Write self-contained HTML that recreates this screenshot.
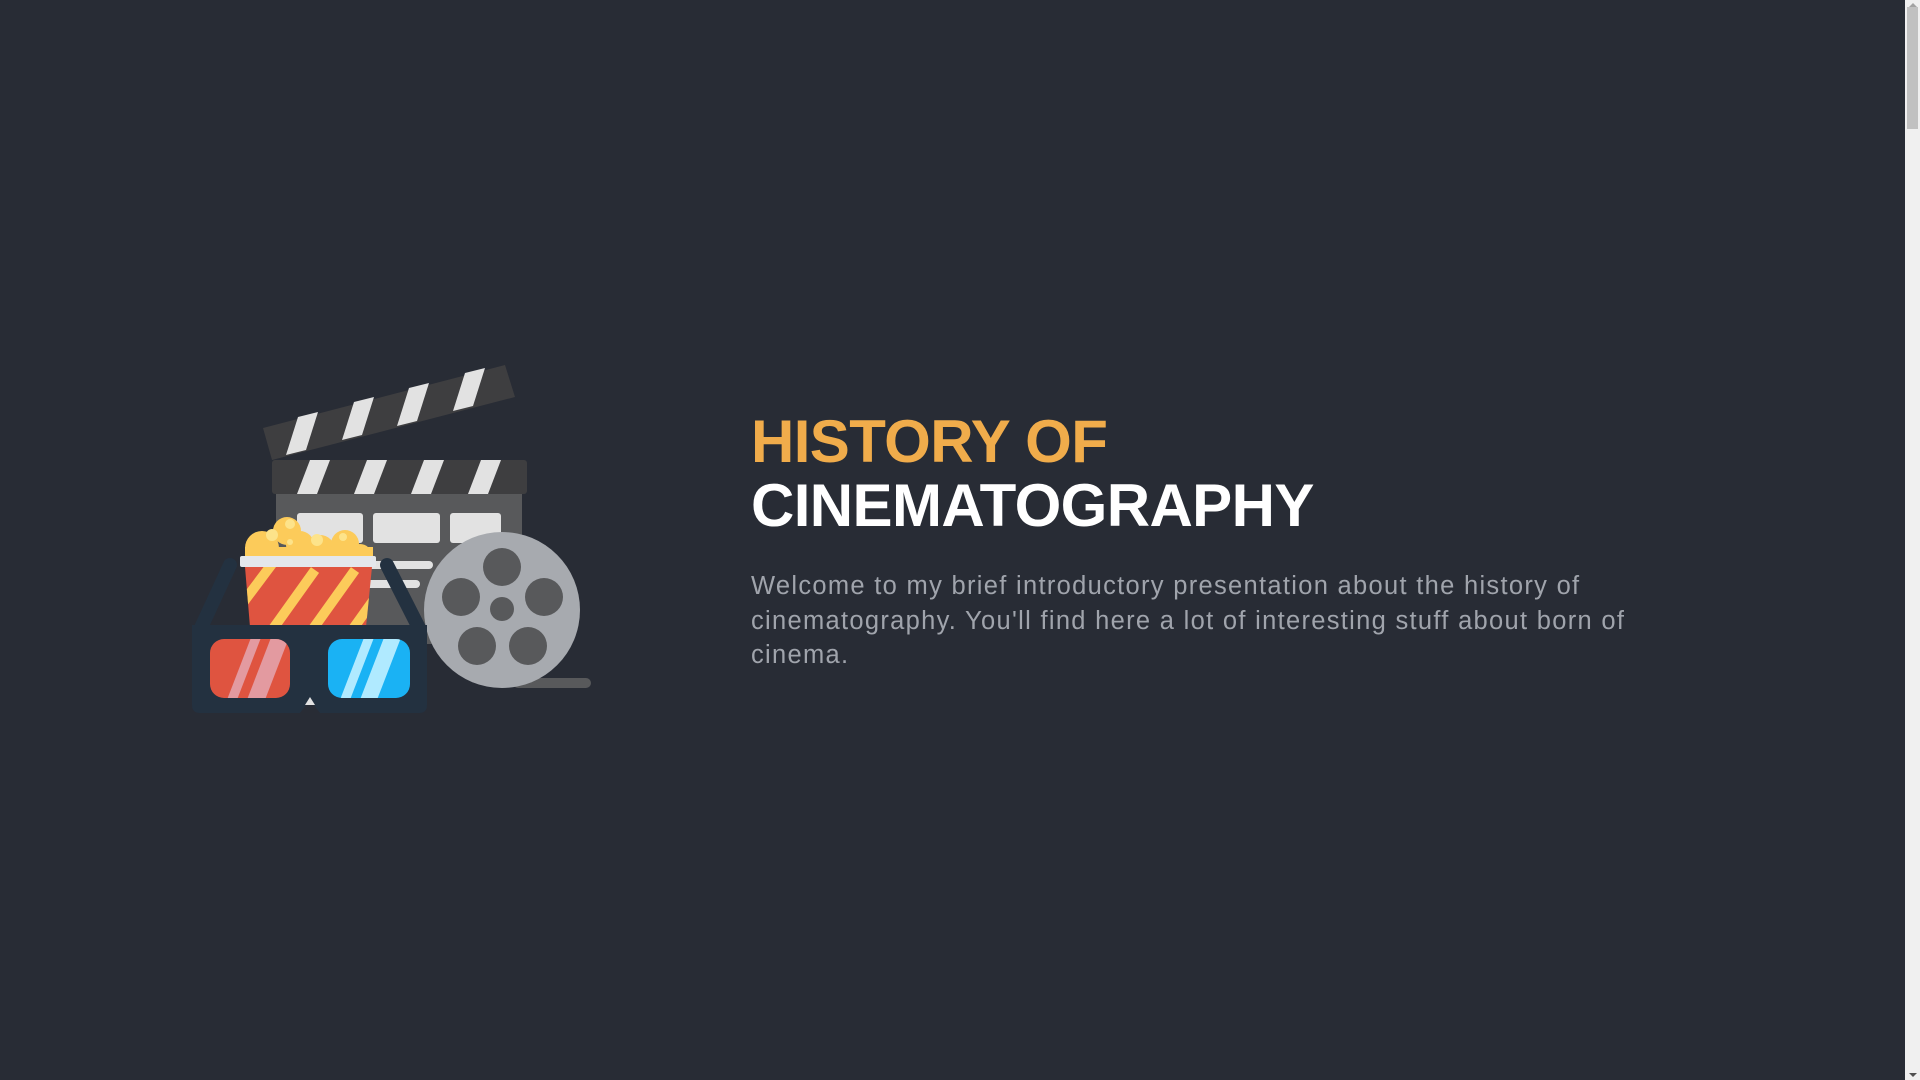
<!DOCTYPE html>
<html><head><meta charset="utf-8"><style>
html,body{margin:0;padding:0;}
body{width:1920px;height:1080px;background:#282c35;overflow:hidden;position:relative;font-family:"Liberation Sans",sans-serif;}
.sb{position:absolute;right:0;top:0;width:15px;height:1080px;background:#f0f0f0;}
.sb .th{position:absolute;left:2px;top:7px;width:11px;height:122px;background:#c1c1c1;}
.sb .up{position:absolute;left:4px;top:3px;width:0;height:0;border-left:4px solid transparent;border-right:4px solid transparent;border-bottom:4px solid #a3a3a3;}
.sb .dn{position:absolute;left:4px;bottom:3px;width:0;height:0;border-left:4px solid transparent;border-right:4px solid transparent;border-top:4px solid #505050;}
h1{position:absolute;left:751px;top:410px;margin:0;font-size:60px;line-height:64px;font-weight:bold;letter-spacing:-0.6px;}
h1 .o{color:#f0ac4b;}h1 .w{color:#fff;}
p{position:absolute;left:751px;top:569px;margin:0;font-size:25.5px;line-height:34.5px;color:#a0a4ac;letter-spacing:1.3px;white-space:nowrap;}
</style></head><body>
<svg style="position:absolute;left:0;top:0" width="700" height="800" viewBox="0 0 700 800">
<rect x="276" y="494" width="246" height="150" fill="#58595b"/>
<rect x="297" y="513" width="66" height="30" rx="3" fill="#e2e2e2"/>
<rect x="373" y="513" width="67" height="30" rx="3" fill="#e2e2e2"/>
<rect x="450" y="513" width="51" height="30" rx="3" fill="#e2e2e2"/>
<rect x="300" y="561" width="133" height="8" rx="4" fill="#e2e2e2"/>
<rect x="300" y="580" width="120" height="8" rx="4" fill="#e2e2e2"/>
<rect x="272" y="460" width="255" height="34" rx="3" fill="#3e3e40"/>
<g fill="#e2e2e2">
<polygon points="297,494 310,460 330,460 317,494"/>
<polygon points="354,494 367,460 387,460 374,494"/>
<polygon points="411,494 424,460 444,460 431,494"/>
<polygon points="468,494 481,460 501,460 488,494"/>
</g>
<polygon points="263,428 505,365 515,397 272,460" fill="#3e3e40"/>
<g fill="#e2e2e2">
<polygon points="286,455 298,417 318,412 306,450"/>
<polygon points="342,440 354,402 374,397 362,435"/>
<polygon points="397,426 409,388 429,383 417,421"/>
<polygon points="453,411 465,373 485,368 473,406"/>
</g>
<rect x="513" y="678" width="78" height="10" rx="5" fill="#58595b"/>
<circle cx="502" cy="610" r="78" fill="#a7aaaf"/>
<g fill="#58595b">
<circle cx="502" cy="567" r="19"/>
<circle cx="461" cy="597" r="19"/>
<circle cx="544" cy="597" r="19"/>
<circle cx="477" cy="646" r="19"/>
<circle cx="528" cy="646" r="19"/>
<circle cx="502" cy="609" r="12"/>
</g>
<g fill="#fccb5a">
<circle cx="262" cy="548" r="17"/><circle cx="287" cy="531" r="14"/><circle cx="300" cy="545" r="14"/>
<circle cx="320" cy="550" r="15"/><circle cx="345" cy="544" r="14"/><circle cx="360" cy="556" r="12"/>
<rect x="245" y="547" width="128" height="12"/>
</g>
<g fill="#fde38a"><circle cx="272" cy="535" r="6"/><circle cx="290" cy="524" r="5"/><circle cx="317" cy="540" r="6"/><circle cx="343" cy="537" r="4"/><circle cx="290" cy="542" r="3"/></g>
<defs><clipPath id="bk"><polygon points="245,567 372,567 366,627 250,627"/></clipPath></defs>
<g clip-path="url(#bk)">
<rect x="240" y="567" width="140" height="60" fill="#df5440"/>
<g stroke="#fccb5a" stroke-width="10">
<line x1="230" y1="620" x2="275" y2="560"/>
<line x1="265" y1="640" x2="315" y2="570"/>
<line x1="305" y1="640" x2="355" y2="570"/>
<line x1="345" y1="640" x2="395" y2="570"/>
</g>
</g>
<rect x="240" y="556" width="136" height="11" rx="2" fill="#e4e7ec"/>
<g stroke="#233140" stroke-width="14" stroke-linecap="round">
<line x1="230" y1="565" x2="200" y2="630"/>
<line x1="387" y1="565" x2="420" y2="630"/>
</g>
<path d="M192,625 H427 V705 Q427,713 419,713 H320 L310,700 L300,713 H200 Q192,713 192,705 Z" fill="#233140"/>
<defs><clipPath id="lr"><rect x="210" y="639" width="80" height="59" rx="14"/></clipPath><clipPath id="lb"><rect x="328" y="639" width="82" height="59" rx="14"/></clipPath></defs>
<g clip-path="url(#lr)"><rect x="205" y="635" width="90" height="70" fill="#df5440"/>
<polygon points="225,705 252,635 262,635 235,705" fill="#e39aa0"/><polygon points="245,705 272,635 290,635 263,705" fill="#e39aa0"/></g>
<g clip-path="url(#lb)"><rect x="325" y="635" width="90" height="70" fill="#1ab2f4"/>
<polygon points="338,705 365,635 375,635 348,705" fill="#b0eaff"/><polygon points="358,705 385,635 402,635 375,705" fill="#b0eaff"/></g>
<polygon points="310,697 315,705 305,705" fill="#e2e2e2"/>
</svg>
<h1><span class="o">HISTORY OF</span><br><span class="w">CINEMATOGRAPHY</span></h1>
<p>Welcome to my brief introductory presentation about the history of<br>cinematography. You'll find here a lot of interesting stuff about born of<br>cinema.</p>
<div class="sb"><div class="up"></div><div class="th"></div><div class="dn"></div></div>
</body></html>
